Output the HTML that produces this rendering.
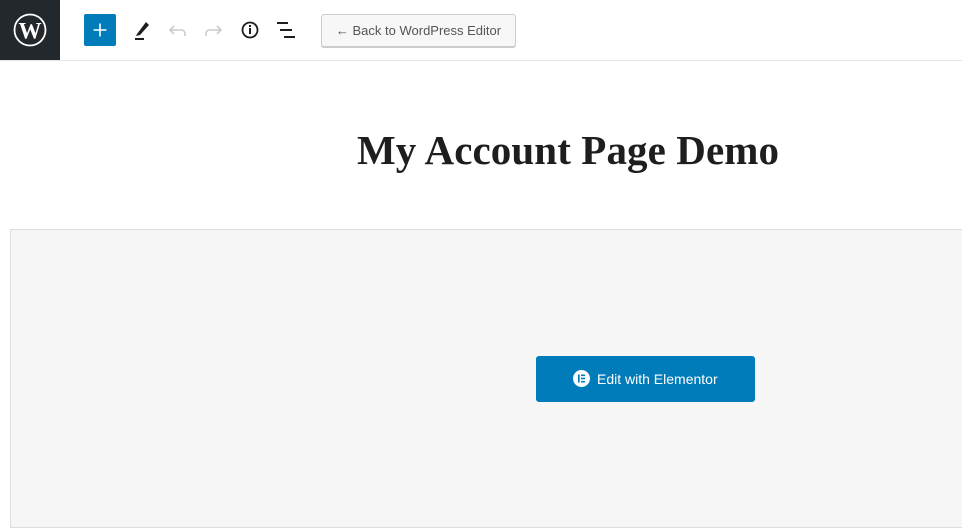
<!DOCTYPE html>
<html><head><meta charset="utf-8"><style>
*{margin:0;padding:0;box-sizing:border-box}
body{width:962px;height:531px;background:#fff;position:relative;overflow:hidden;font-family:"Liberation Sans",sans-serif}
.top{position:absolute;left:0;top:0;width:962px;height:61px;border-bottom:1px solid #e2e4e7;background:#fff}
.wp{position:absolute;left:0;top:0;width:60px;height:60px;background:#23282d}
.plus{position:absolute;left:84px;top:14px;width:32px;height:32px;background:#007cba;border-radius:2px}
.ic{position:absolute;top:18px}
.back{position:absolute;left:321px;top:14px;width:195px;height:33px;border:1px solid #ccc;border-radius:3px;background:#f7f7f7;font-size:13px;color:#555;line-height:31px;text-align:center;box-shadow:0 1px 0 #ccc}
h1{position:absolute;left:357px;top:126px;font-family:"Liberation Serif",serif;font-weight:bold;font-size:41px;color:#1e1e1e;letter-spacing:0.1px;white-space:nowrap}
.box{position:absolute;left:10px;top:229px;width:960px;height:299px;background:#f6f6f6;border:1px solid #ddd}
.btn{position:absolute;left:536px;top:356px;width:219px;height:46px;background:#007cba;border-radius:3px;color:#fff;font-size:14px;line-height:46px}
.btn svg{position:absolute;left:37px;top:14px;display:block}
.btn span{position:absolute;left:61px;top:0}
</style></head><body>
<div class="top">
<div class="wp"><svg width="60" height="60" viewBox="0 0 60 60"><circle cx="30" cy="30" r="15.5" fill="none" stroke="#fff" stroke-width="1.8"/><text x="30" y="38.5" text-anchor="middle" fill="#fff" font-family="Liberation Serif" font-weight="bold" font-size="23">W</text></svg></div>
<div class="plus"><svg width="32" height="32" viewBox="0 0 32 32"><path d="M16 9.5V22.5M9.5 16H22.5" stroke="#fff" stroke-width="1.6"/></svg></div>
<svg class="ic" style="left:132px" width="20" height="24" viewBox="0 0 20 24"><path d="M5 16 L14 4 L17 7 L8 17 L4 18Z" fill="#1e1e1e"/><rect x="3" y="20" width="9" height="2" fill="#1e1e1e"/></svg>
<svg class="ic" style="left:168px" width="20" height="24" viewBox="0 0 20 24"><path d="M6 8 L2 12 L6 16 M2 12 H13 Q17 12 17 16 V18" fill="none" stroke="#ccc" stroke-width="1.6"/></svg>
<svg class="ic" style="left:203px" width="20" height="24" viewBox="0 0 20 24"><path d="M14 8 L18 12 L14 16 M18 12 H7 Q3 12 3 16 V18" fill="none" stroke="#ccc" stroke-width="1.6"/></svg>
<svg class="ic" style="left:240px" width="20" height="24" viewBox="0 0 20 24"><circle cx="10" cy="12" r="7.5" fill="none" stroke="#1e1e1e" stroke-width="1.8"/><rect x="9" y="10" width="2" height="6" fill="#1e1e1e"/><rect x="9" y="7" width="2" height="2" fill="#1e1e1e"/></svg>
<svg class="ic" style="left:276px" width="20" height="24" viewBox="0 0 20 24"><rect x="1" y="4" width="11" height="2" fill="#1e1e1e"/><rect x="4" y="11" width="12" height="2" fill="#1e1e1e"/><rect x="8" y="18" width="11" height="2" fill="#1e1e1e"/></svg>
<div class="back">← Back to WordPress Editor</div>
</div>
<h1>My Account Page Demo</h1>
<div class="box"></div>
<div class="btn"><svg width="17" height="17" viewBox="0 0 17 17"><circle cx="8.5" cy="8.5" r="8.5" fill="#fff"/><rect x="5" y="4.5" width="1.7" height="8" fill="#007cba"/><rect x="8" y="4.5" width="4" height="1.6" fill="#007cba"/><rect x="8" y="7.7" width="4" height="1.6" fill="#007cba"/><rect x="8" y="10.9" width="4" height="1.6" fill="#007cba"/></svg><span>Edit with Elementor</span></div>
</body></html>
